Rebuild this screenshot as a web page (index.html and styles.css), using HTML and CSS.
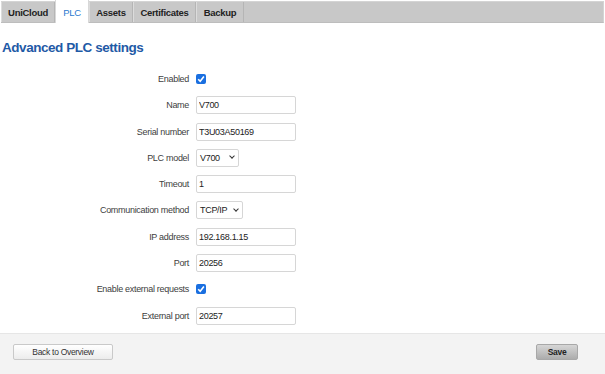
FILE: index.html
```html
<!DOCTYPE html>
<html lang="en">
<head>
  <meta charset="UTF-8">
  <meta name="viewport" content="width=device-width, initial-scale=1.0">
  <title>PLC</title>
  <link rel="stylesheet" href="styles.css">
</head>
<body>

  <!-- Tabs -->
  <div class="tabs">
    <div class="tab t-unicloud">UniCloud</div>
    <div class="tab t-plc active">PLC</div>
    <div class="tab t-assets">Assets</div>
    <div class="tab t-certs">Certificates</div>
    <div class="tab t-backup">Backup</div>
  </div>

  <h2 class="title">Advanced PLC settings</h2>

  <!-- Settings form -->
  <div class="form">
    <div class="row">
      <label>Enabled</label>
      <span class="check"><svg width="10" height="10" viewBox="0 0 10 10"><path d="M2.2 5.2 L4.2 7.2 L7.9 2.6" fill="none" stroke="#fff" stroke-width="1.6"/></svg></span>
    </div>
    <div class="row">
      <label>Name</label>
      <input type="text" class="text" value="V700">
    </div>
    <div class="row">
      <label>Serial number</label>
      <input type="text" class="text" value="T3U03A50169">
    </div>
    <div class="row">
      <label>PLC model</label>
      <div class="select model">V700 <span class="arrow"></span></div>
    </div>
    <div class="row">
      <label>Timeout</label>
      <input type="text" class="text" value="1">
    </div>
    <div class="row">
      <label>Communication method</label>
      <div class="select method">TCP/IP <span class="arrow"></span></div>
    </div>
    <div class="row">
      <label>IP address</label>
      <input type="text" class="text" value="192.168.1.15">
    </div>
    <div class="row">
      <label>Port</label>
      <input type="text" class="text" value="20256">
    </div>
    <div class="row">
      <label>Enable external requests</label>
      <span class="check"><svg width="10" height="10" viewBox="0 0 10 10"><path d="M2.2 5.2 L4.2 7.2 L7.9 2.6" fill="none" stroke="#fff" stroke-width="1.6"/></svg></span>
    </div>
    <div class="row">
      <label>External port</label>
      <input type="text" class="text" value="20257">
    </div>
  </div>

  <!-- Footer -->
  <div class="footer">
    <button class="btn">Back to Overview</button>
    <button class="btn save">Save</button>
  </div>

</body>
</html>
```

FILE: styles.css
```css
/* Base */
body {
  font-family: 'Liberation Sans', Arial, sans-serif;
  background-color: #ffffff;
  color: #333333;
  margin: 0;
  padding: 0;
  width: 605px;
  height: 374px;
  overflow: hidden;
  position: relative;
}

/* Tabs */
.tabs {
  display: flex;
  margin: 1px 1px 0 1px;
  height: 22px;
  background-color: #c8c8c8;
  border: 1px solid #d4d4d4;
  border-left: none;
  border-bottom: 1px solid #bdbdbd;
  box-sizing: border-box;
}

.tab {
  box-sizing: border-box;
  text-align: center;
  font-size: 9.5px;
  font-weight: bold;
  letter-spacing: -0.3px;
  color: #222;
  line-height: 21px;
  border-right: 1px solid #b5b5b5;
  border-left: 1px solid #dcdcdc;
}

.t-unicloud { width: 54px; }
.t-plc { width: 34px; }
.t-assets { width: 44px; }
.t-certs { width: 63px; }
.t-backup { width: 48px; }

.tab.active {
  background-color: #ffffff;
  color: #2a7ad0;
  font-weight: normal;
  border-color: #d8d8d8;
  height: 23px;
  margin-top: -2px;
  line-height: 25px;
}

/* Heading */
.title {
  font-size: 13.5px;
  font-weight: bold;
  letter-spacing: -0.45px;
  color: #1f5aa6;
  margin: 17px 0 0 2px;
}

/* Form */
.form {
  margin-top: 15px;
}

.row {
  display: flex;
  align-items: center;
  height: 18px;
  margin-bottom: 8.3px;
}

.row label {
  width: 189px;
  text-align: right;
  font-size: 9px;
  letter-spacing: -0.3px;
  color: #404040;
  margin-right: 7px;
}

.text {
  width: 100px;
  height: 18px;
  box-sizing: border-box;
  border: 1px solid #d6d6d6;
  border-radius: 2px;
  padding: 0 2px;
  font-family: 'Liberation Sans', Arial, sans-serif;
  font-size: 9px;
  letter-spacing: -0.3px;
  color: #222;
}

.check {
  width: 10px;
  height: 10px;
  background-color: #1a6fe0;
  border-radius: 2px;
  display: flex;
}

.select {
  height: 18px;
  box-sizing: border-box;
  border: 1px solid #d6d6d6;
  border-radius: 2px;
  padding: 0 4px 0 3px;
  font-size: 9px;
  letter-spacing: -0.3px;
  color: #222;
  display: flex;
  align-items: center;
  justify-content: space-between;
}

.model {
  width: 43px;
}

.method {
  width: 47px;
}

.arrow {
  width: 3px;
  height: 3px;
  border-right: 1.5px solid #333;
  border-bottom: 1.5px solid #333;
  transform: rotate(45deg);
  margin: -3px 0 0 0;
}

/* Footer */
.footer {
  position: absolute;
  left: 0;
  right: 0;
  top: 333px;
  bottom: 0;
  background-color: #f3f3f3;
  border-top: 1px solid #e6e6e6;
  display: flex;
  justify-content: space-between;
  align-items: flex-start;
  padding: 10px 27px 0 13px;
}

.btn {
  height: 16px;
  width: 100px;
  border: 1px solid #c9c9c9;
  border-radius: 2px;
  background: linear-gradient(#ffffff, #ececec);
  font-family: 'Liberation Sans', Arial, sans-serif;
  font-size: 8.5px;
  letter-spacing: -0.3px;
  color: #333;
  padding: 0;
}

.save {
  width: 42px;
  background: linear-gradient(#d6d6d6, #acacac);
  border-color: #a8a8a8;
  font-weight: bold;
  color: #222;
}
```
